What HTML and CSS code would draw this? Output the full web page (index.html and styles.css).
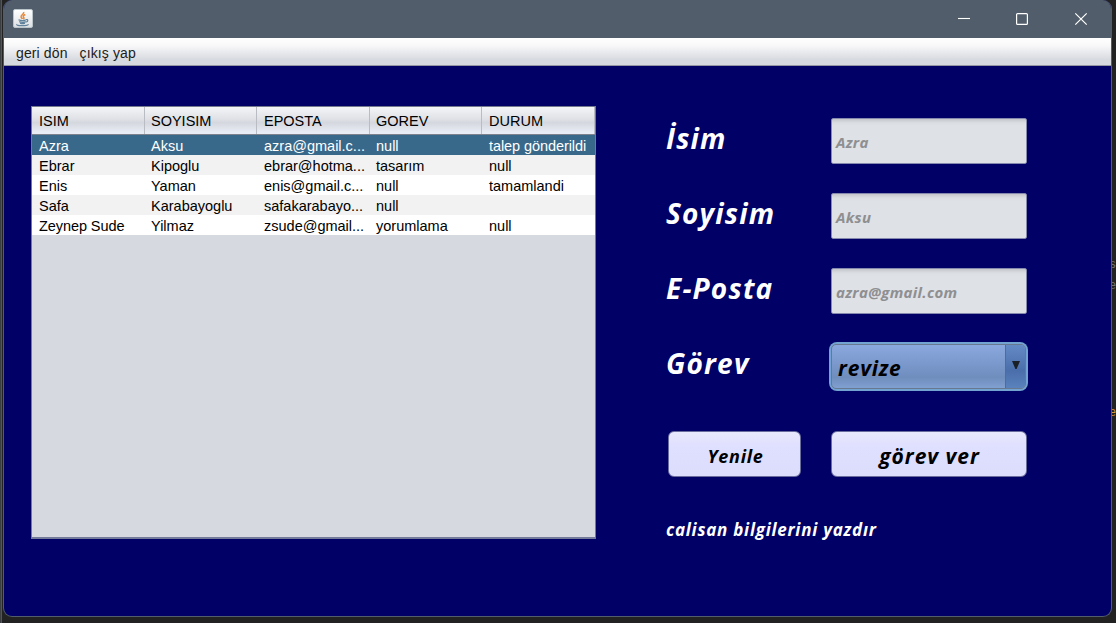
FILE: index.html
```html
<!DOCTYPE html>
<html lang="tr">
<head>
<meta charset="utf-8">
<title>Görev</title>
<link rel="stylesheet" href="styles.css">
</head>
<body>
<div class="backdrop">
  <span class="behind behind-a">s</span>
  <span class="behind behind-b">e</span>
  <span class="behind behind-c">e</span>
</div>
<div class="window">
  <header class="titlebar">
    <svg class="java" width="20" height="20" viewBox="0 0 20 20">
      <defs><linearGradient id="tile" x1="0" y1="0" x2="0" y2="1"><stop offset="0" stop-color="#fff"/><stop offset="1" stop-color="#dcdfe2"/></linearGradient></defs>
      <rect x=".5" y=".5" width="19" height="18" rx="1.5" fill="url(#tile)" stroke="#b9c4cb"/>
      <path d="M10.700 3c.8 2-3.300 3-2.600 5 .2.8 1 1.300 1.300 2M12.300 5.500c-2 1-2.600 1.800-1.600 3 .5.700.2 1.300-.4 1.700" fill="none" stroke="#e58a3c" stroke-width="1.500"/>
      <path d="M5.500 10.800c2 .8 6 .8 7.800 0M6.200 12.600c1.800.8 5 .8 6.600 0M7 14.200c1.400.5 3.800.5 5 0M13 10.600c2.200-.6 2.600 1.400.2 2.500M4 15.300c-1 .9 1.500 1.400 5 1.400s6.500-.5 6.300-1.600" fill="none" stroke="#5f819b" stroke-width="1.200"/>
    </svg>
    <svg class="controls" width="130" height="14" viewBox="0 0 130 14" fill="none" stroke="#fff">
      <path d="M0 6.500h12" stroke-width="1.100"/>
      <rect x="58.600" y="1.600" width="10.800" height="10.800" rx="1" stroke-width="1.200"/>
      <path d="M117.300 1.300l11.400 11.400M128.700 1.300l-11.400 11.400" stroke-width="1.200"/>
    </svg>
  </header>
  <nav class="menubar"><span>geri dön</span><span>çıkış yap</span></nav>
  <main class="content">
    <section class="table-pane">
      <div class="row head"><span>ISIM</span><span>SOYISIM</span><span>EPOSTA</span><span>GOREV</span><span>DURUM</span></div>
      <div class="row selected"><span>Azra</span><span>Aksu</span><span>azra@gmail.c...</span><span>null</span><span class="snug">talep gönderildi</span></div>
      <div class="row even"><span>Ebrar</span><span>Kipoglu</span><span>ebrar@hotma...</span><span>tasarım</span><span>null</span></div>
      <div class="row"><span>Enis</span><span>Yaman</span><span>enis@gmail.c...</span><span>null</span><span>tamamlandi</span></div>
      <div class="row even"><span>Safa</span><span>Karabayoglu</span><span>safakarabayo...</span><span>null</span><span></span></div>
      <div class="row"><span class="snug">Zeynep Sude</span><span>Yilmaz</span><span>zsude@gmail...</span><span>yorumlama</span><span>null</span></div>
    </section>
    <section class="form">
      <div class="fields">
        <label class="label">İsim</label><div class="field">Azra</div>
        <label class="label">Soyisim</label><div class="field">Aksu</div>
        <label class="label">E-Posta</label><div class="field">azra@gmail.com</div>
        <label class="label">Görev</label>
        <div class="combo"><div class="combo-box"><span class="combo-text">revize</span><span class="combo-arrow"><svg width="8" height="8" viewBox="0 0 8 8"><path d="M0 0h8L4.600 8h-1.200z" fill="#1b2027"/></svg></span></div></div>
      </div>
      <div class="buttons"><button class="btn small">Yenile</button><button class="btn large">görev ver</button></div>
      <p class="status">calisan bilgilerini yazdır</p>
    </section>
  </main>
</div>
</body>
</html>
```
FILE: styles.css
```css
* { box-sizing: border-box; }
body {
  margin: 0;
  width: 1116px;
  height: 623px;
  overflow: hidden;
  background: #222;
  padding: 0 4px 6px 3px;
  font-family: "Liberation Sans", Arial, sans-serif;
}
.backdrop {
  position: absolute;
  inset: 0;
  background: linear-gradient(90deg, #3c3f41 0 1px, #555 1px 2px, #222 2px);
}
.behind {
  position: absolute;
  left: 1109px;
  font: 12px "Liberation Mono", monospace;
  color: #77716a;
}
.behind-a { top: 258px; }
.behind-b { top: 279px; }
.behind-c { top: 406px; color: #d6963a; }
.window {
  position: relative;
  height: 617px;
  display: flex;
  flex-direction: column;
  border: 1px solid #515d6a;
  border-top: 0;
  border-radius: 9px;
  overflow: hidden;
  background: #000066;
}
.titlebar {
  height: 38px;
  flex: none;
  display: flex;
  justify-content: space-between;
  background: #515d6b;
  padding: 9px 23px 0 9px;
}
.controls { margin-top: 3px; }
.menubar {
  height: 28px;
  flex: none;
  display: flex;
  gap: 12px;
  padding-left: 12px;
  font-size: 14px;
  line-height: 30px;
  letter-spacing: 0.12px;
  color: #1c1c20;
  background: linear-gradient(#fff, #f8f8f9 28%, #d6d9df 82%, #d6d9df);
  border-bottom: 1px solid #9297a1;
}
.content { display: flex; padding: 40px 0 0 27px; gap: 70px; }
.table-pane {
  width: 565px;
  height: 433px;
  flex: none;
  border: 1px solid #747a8e;
  border-bottom: 2px solid #747a9a;
  background: #d6d9e0;
}
.row {
  display: grid;
  grid-template-columns: 113px 112px 113px 112px 1fr;
  height: 20px;
  background: #fff;
  color: #000;
  font-size: 14.5px;
  line-height: 23px;
  white-space: nowrap;
}
.row span { padding-left: 7px; }
.row span:nth-child(even) { padding-left: 6px; }
.row .snug { letter-spacing: -0.08px; }
.row.even { background: #f2f2f2; }
.row.selected { background: #39698a; color: #fff; }
.row.head {
  height: 28px;
  line-height: 29px;
  background: linear-gradient(#f4f5f7, #dfe1e6 45%, #d4d7de 58%, #e9edf5 95%);
  border-bottom: 1px solid #7d828c;
}
.row.head span {
  height: 27px;
  border-right: 1px solid #b9bcc3;
}
.form {
  width: 365px;
  padding-top: 12px;
  font-family: "Open Sans", "Noto Sans", sans-serif;
  font-weight: 700;
  font-style: italic;
}
.fields {
  display: grid;
  grid-template-columns: 164px 198px;
  grid-template-rows: 46px 46px 46px 48px;
  row-gap: 29px;
}
.label { color: #fff; font-size: 28px; line-height: 40px; letter-spacing: 1.2px; white-space: nowrap; }
.field {
  width: 196px;
  height: 46px;
  margin-left: 1px;
  padding-left: 4px;
  border: 1px solid #8489ad;
  border-radius: 2px;
  background: linear-gradient(#c4c6cc, #dbdee3 4px, #dee1e6 7px);
  color: #8e8f91;
  font-size: 15px;
  line-height: 47px;
  letter-spacing: 0.3px;
}
.combo {
  width: 199px;
  height: 49px;
  margin: -1px 0 0 -1px;
  padding: 2px;
  border-radius: 8px;
  background: #73a4d1;
}
.combo-box {
  display: flex;
  height: 45px;
  border: 1px solid #68788e;
  border-radius: 5px;
  background: linear-gradient(#8aa8dd, #7a98cb 45%, #6f8dbd 75%, #80a0d1);
  overflow: hidden;
}
.combo-text { flex: 1; padding-left: 6px; color: #000; font-size: 21px; line-height: 46px; letter-spacing: 0.8px; }
.combo-arrow {
  width: 20px;
  display: flex;
  justify-content: center;
  padding-top: 16px;
  border-left: 1px solid #496da5;
  background: linear-gradient(#648ac5, #4a6ea9 60%, #5a82bd);
}
.buttons { display: flex; gap: 30px; padding: 40px 0 0 2px; }
.btn {
  height: 46px;
  padding: 3px 0 0;
  border: 1px solid #696d9d;
  border-radius: 6px;
  background: linear-gradient(#e8e8fd, #dfdfff 35%, #dcdcfb);
  color: #000;
  font: inherit;
}
.btn.small { width: 133px; padding-left: 2px; font-size: 18px; letter-spacing: 0.7px; }
.btn.large { width: 196px; padding-left: 1px; font-size: 21px; letter-spacing: 1px; }
.status { margin: 41px 0 0; color: #fff; font-size: 17px; line-height: 24px; letter-spacing: 0.75px; white-space: nowrap; }
```
